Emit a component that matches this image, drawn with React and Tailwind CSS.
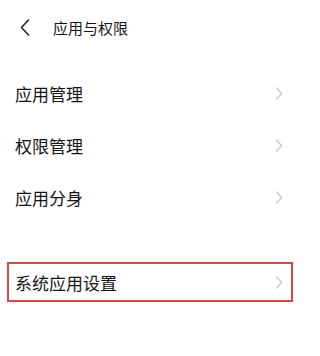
const Chevron = () => (
  <svg width="8" height="13" viewBox="0 0 8 13" fill="none">
    <path d="M1.5 1 L6.5 6.5 L1.5 12" stroke="#c9c9c9" strokeWidth="1.4" strokeLinecap="round" strokeLinejoin="round" />
  </svg>
);

const rows = ["应用管理", "权限管理", "应用分身"];

export default function App() {
  return (
    <div
      className="w-[300px] h-[356px] bg-white text-[#141414] overflow-hidden"
      style={{ fontFamily: '"Noto Sans CJK SC", "Noto Sans", sans-serif' }}
    >
      <div className="h-[55px] flex items-center pl-[20px]">
        <svg width="10" height="17" viewBox="0 0 10 17" fill="none">
          <path d="M8.5 1 L1.5 8.5 L8.5 16" stroke="#222" strokeWidth="1.6" strokeLinecap="round" strokeLinejoin="round" />
        </svg>
        <span className="ml-[23px] text-[15px] leading-none">应用与权限</span>
      </div>
      <div className="mt-[12px]">
        {rows.map((r) => (
          <div key={r} className="h-[52px] flex items-center justify-between pl-[15px] pr-[17px]">
            <span className="text-[17px] leading-none">{r}</span>
            <Chevron />
          </div>
        ))}
      </div>
      <div className="mt-[39px] mx-[7px] h-[40px] border-2 border-[#d64848] flex items-center justify-between pl-[6px] pr-[8px]">
        <span className="text-[17px] leading-none">系统应用设置</span>
        <Chevron />
      </div>
    </div>
  );
}
